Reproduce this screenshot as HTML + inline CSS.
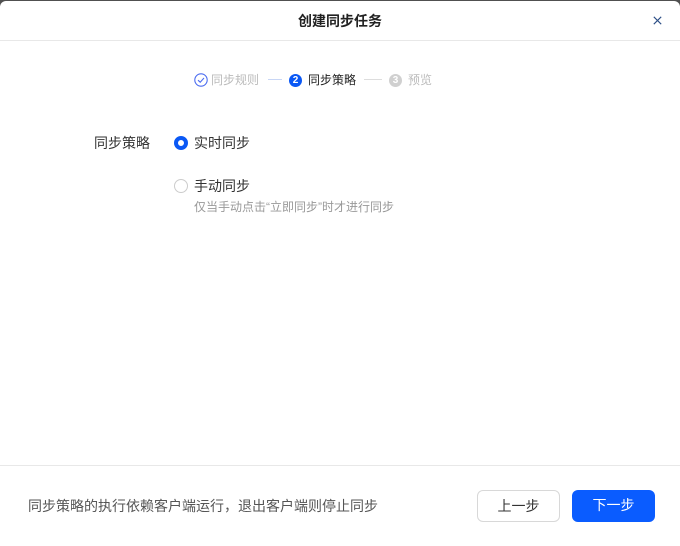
<!DOCTYPE html>
<html><head><meta charset="utf-8"><style>
html,body{margin:0;padding:0;width:680px;height:546px;background:#505050;overflow:hidden}
*{box-sizing:border-box}
body{font-family:"Liberation Sans","Noto Sans CJK SC",sans-serif;}
.d{position:absolute;left:0;top:1px;width:680px;height:545px;background:#fff;border-radius:6px 6px 0 0}
.t{position:absolute;top:11px;left:0;width:680px;text-align:center;font-size:14px;color:#222;font-weight:bold;line-height:18px}
.x{position:absolute;left:653px;top:15px}
.hl{position:absolute;top:39px;left:0;width:680px;height:1px;background:#e8e8e8}
.fl{position:absolute;top:464px;left:0;width:680px;height:1px;background:#e8e8e8}
.s{position:absolute;font-size:12px;top:71px;line-height:16px}
.c{position:absolute;width:13px;height:13px;border-radius:50%;font-size:10px;color:#fff;text-align:center;line-height:13px;font-weight:bold}
.ln{position:absolute;top:78px;height:1px}
.lab{position:absolute;font-size:14px;color:#333;line-height:18px}
.btn{position:absolute;top:489px;width:83px;height:32px;border-radius:6px;font-size:14px;text-align:center;line-height:30px}
</style></head><body>
<div class="d">
<div class="t">创建同步任务</div>
<svg class="x" width="9" height="9" viewBox="0 0 9 9"><path d="M0.8 0.8L8.2 8.2M8.2 0.8L0.8 8.2" stroke="#2d4f86" stroke-width="1.1"/></svg>
<div class="hl"></div>
<svg style="position:absolute;left:194px;top:72px" width="14" height="14" viewBox="0 0 14 14"><circle cx="7" cy="7" r="6.2" fill="none" stroke="#4b6cf0" stroke-width="1.1"/><path d="M4 7.2L6.2 9.2L10 5" fill="none" stroke="#4b6cf0" stroke-width="1.1"/></svg>
<div class="s" style="left:211px;color:#bbb">同步规则</div>
<div class="ln" style="left:268px;width:14px;background:#c8d6f5"></div>
<div class="c" style="left:289px;top:73px;background:#0a58f5">2</div>
<div class="s" style="left:308px;color:#222">同步策略</div>
<div class="ln" style="left:364px;width:18px;background:#ddd"></div>
<div class="c" style="left:389px;top:73px;background:#d0d0d0">3</div>
<div class="s" style="left:408px;color:#bbb">预览</div>
<div class="lab" style="left:94px;top:133px">同步策略</div>
<div style="position:absolute;left:174px;top:135px;width:14px;height:14px;border-radius:50%;border:4px solid #0a58f5"></div>
<div class="lab" style="left:194px;top:133px">实时同步</div>
<div style="position:absolute;left:174px;top:178px;width:14px;height:14px;border-radius:50%;border:1px solid #ccc"></div>
<div class="lab" style="left:194px;top:176px">手动同步</div>
<div style="position:absolute;left:194px;top:198px;font-size:12px;color:#999;line-height:16px">仅当手动点击“立即同步”时才进行同步</div>
<div class="fl"></div>
<div style="position:absolute;left:28px;top:496px;font-size:14px;color:#555;line-height:18px">同步策略的执行依赖客户端运行，退出客户端则停止同步</div>
<div class="btn" style="left:477px;border:1px solid #d8d8d8;color:#333">上一步</div>
<div class="btn" style="left:572px;background:#0a5cff;color:#fff">下一步</div>
</div>
</body></html>
